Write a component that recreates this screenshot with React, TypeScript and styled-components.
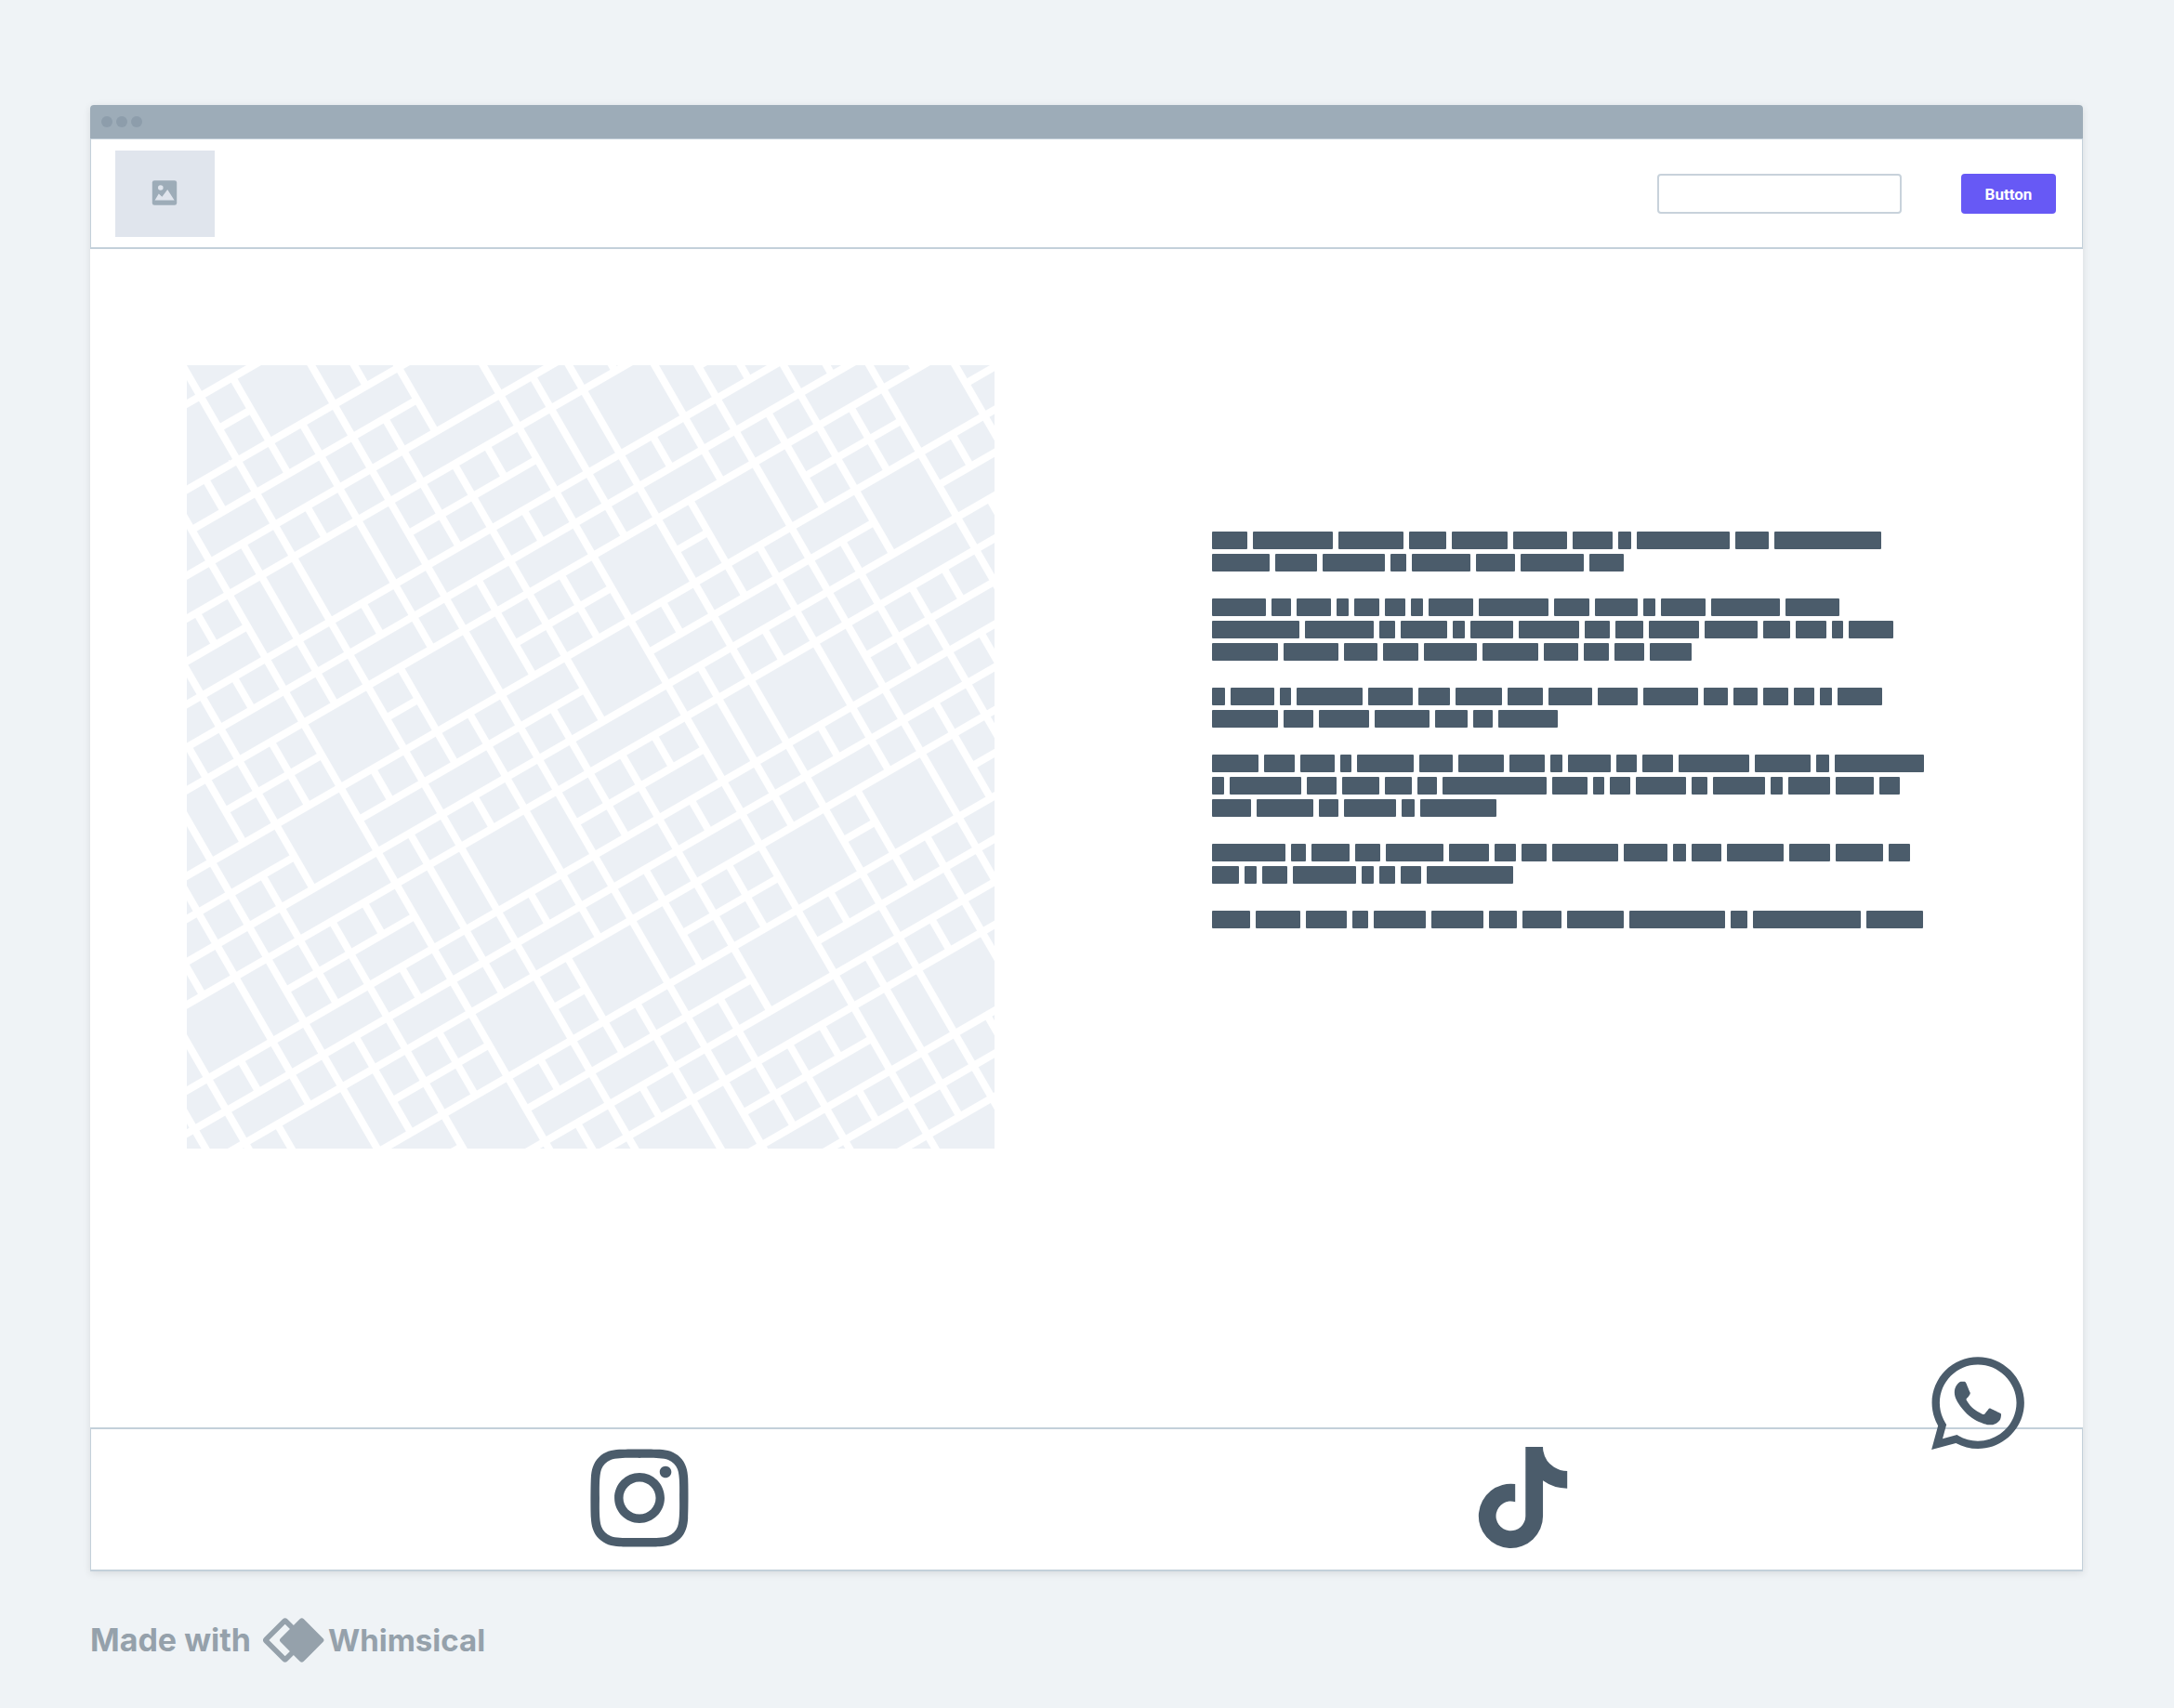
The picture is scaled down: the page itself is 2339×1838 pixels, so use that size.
import React from 'react';
import styled, { createGlobalStyle } from 'styled-components';
import { FaInstagram, FaTiktok, FaWhatsapp } from 'react-icons/fa';

const colors = {
  page: '#eff3f6',
  chrome: '#9dacb8',
  chromeDot: '#8d9dab',
  line: '#c3d0da',
  placeholder: '#e0e5ed',
  block: '#ecf0f5',
  ink: '#4b5c6b',
  accent: '#6759f5',
  credit: '#95a1ab',
};

const GlobalStyle = createGlobalStyle`
  *, *::before, *::after { box-sizing: border-box; }
  body {
    margin: 0;
    background: ${colors.page};
    font-family: Inter, "Liberation Sans", sans-serif;
  }
`;

const Page = styled.div`
  padding: 113px 98px 48px 97px;
`;

const Window = styled.div`
  border-radius: 4px 4px 0 0;
  background: #fff;
  box-shadow: 0 2px 8px rgba(0, 0, 0, 0.1);
`;

const TitleBar = styled.div`
  display: flex;
  align-items: center;
  gap: 4px;
  height: 36px;
  padding: 0 12px;
  border-radius: 4px 4px 0 0;
  background: ${colors.chrome};
`;

const Dot = styled.span`
  width: 12px;
  height: 12px;
  border-radius: 50%;
  background: ${colors.chromeDot};
`;

const Header = styled.header`
  display: flex;
  align-items: center;
  justify-content: space-between;
  padding: 12px 28px 11px 26px;
  border: 1px solid ${colors.line};
  border-bottom-width: 2px;
`;

const ImagePlaceholder = styled.div`
  display: flex;
  align-items: center;
  justify-content: center;
  width: 107px;
  height: 93px;
  background: ${colors.placeholder};
`;

const Actions = styled.form`
  display: flex;
  align-items: center;
  gap: 64px;
`;

const SearchInput = styled.input`
  width: 263px;
  height: 43px;
  padding: 0 12px;
  border: 2px solid #c8d2db;
  border-radius: 4px;
  background: #fff;
  color: ${colors.ink};
  font: 500 17px Roboto, sans-serif;
`;

const PrimaryButton = styled.button`
  width: 102px;
  height: 43px;
  padding: 0;
  border: 0;
  border-radius: 4px;
  background: ${colors.accent};
  color: #fff;
  font: 700 17px Roboto, sans-serif;
`;

const Main = styled.main`
  display: grid;
  grid-template-columns: minmax(0, 869px) minmax(0, 766px);
  column-gap: 234px;
  align-items: start;
  padding: 125px 104px 300px;
`;

const MapDrawing = styled.svg`
  display: block;
  width: 100%;
  height: auto;
`;

const Copy = styled.div`
  display: flex;
  flex-direction: column;
  gap: 29px;
  padding-top: 179px;
`;

const Paragraph = styled.div`
  display: flex;
  flex-direction: column;
  gap: 5px;
`;

const Line = styled.div`
  display: flex;
  gap: 6px;
`;

const Word = styled.span`
  height: 19px;
  border-radius: 1px;
  background: ${colors.ink};
`;

const Footer = styled.footer`
  position: relative;
  display: flex;
  align-items: center;
  justify-content: space-between;
  height: 155px;
  padding: 0 25.5% 4px 24.7%;
  border: 1px solid ${colors.line};
  border-top-width: 2px;
  border-bottom-width: 2px;
`;

const SocialLink = styled.a<{ $size: number }>`
  display: flex;
  color: ${colors.ink};
  font-size: ${(p) => p.$size}px;
`;

const FloatingLink = styled(SocialLink)`
  position: absolute;
  top: -85px;
  right: 55px;
`;

const Credit = styled.div`
  display: flex;
  align-items: center;
  margin-top: 50px;
  color: ${colors.credit};
  font-size: 34px;
  font-weight: 700;
  line-height: 48px;
`;

const CreditLogo = styled.svg`
  display: block;
  width: 66px;
  height: 48px;
  margin: 0 4px 0 13px;
`;

const CreditBrand = styled.span`
  font-size: 33px;
`;

const UNIT = 40;
const ROAD = 8;

/* City blocks as [column, row, columns spanned, rows spanned] on a 9 x 9 tile. */
const cityBlocks: number[][] = [
  [0, 0, 1, 1], [1, 0, 1, 1], [2, 0, 1, 1], [3, 0, 2, 1], [5, 0, 2, 2], [7, 0, 1, 1], [8, 0, 1, 1],
  [0, 1, 2, 1], [2, 1, 1, 1], [3, 1, 1, 1], [4, 1, 1, 1], [7, 1, 2, 1],
  [0, 2, 1, 1], [1, 2, 1, 1], [2, 2, 1, 1], [3, 2, 1, 1], [4, 2, 3, 1], [7, 2, 1, 1], [8, 2, 1, 1],
  [0, 3, 2, 2], [2, 3, 1, 2], [3, 3, 1, 1], [4, 3, 1, 1], [5, 3, 1, 1], [6, 3, 1, 1], [7, 3, 1, 2], [8, 3, 1, 2],
  [3, 4, 1, 1], [4, 4, 1, 1], [5, 4, 2, 1],
  [0, 5, 1, 1], [1, 5, 1, 1], [2, 5, 1, 1], [3, 5, 2, 1], [5, 5, 1, 1], [6, 5, 1, 1], [7, 5, 1, 1], [8, 5, 1, 1],
  [0, 6, 2, 1], [2, 6, 1, 1], [3, 6, 1, 1], [4, 6, 1, 1], [5, 6, 2, 1], [7, 6, 1, 1], [8, 6, 1, 1],
  [0, 7, 1, 1], [1, 7, 2, 2], [3, 7, 1, 2], [4, 7, 1, 1], [5, 7, 1, 1], [6, 7, 1, 1], [7, 7, 2, 2],
  [0, 8, 1, 1], [4, 8, 1, 1], [5, 8, 1, 1], [6, 8, 1, 1],
];

/* Word widths, grouped by paragraph and line. */
const paragraphs: number[][][] = [
  [
    [38, 86, 70, 40, 60, 58, 43, 14, 100, 36, 115],
    [62, 45, 67, 17, 63, 42, 68, 37],
  ],
  [
    [58, 21, 37, 13, 27, 22, 13, 48, 75, 38, 46, 13, 48, 74, 58],
    [94, 74, 17, 50, 13, 46, 65, 27, 30, 54, 57, 29, 33, 12, 48],
    [71, 59, 36, 38, 57, 60, 37, 27, 32, 45],
  ],
  [
    [14, 47, 12, 71, 48, 34, 50, 38, 47, 43, 59, 26, 26, 27, 22, 13, 48],
    [71, 32, 54, 59, 35, 21, 64],
  ],
  [
    [50, 33, 37, 12, 61, 36, 49, 38, 13, 46, 22, 33, 76, 60, 14, 96],
    [13, 77, 32, 40, 29, 21, 112, 38, 12, 22, 54, 17, 56, 13, 45, 41, 22],
    [42, 61, 21, 56, 14, 82],
  ],
  [
    [79, 16, 41, 27, 62, 43, 23, 27, 71, 47, 14, 32, 61, 44, 51, 23],
    [29, 13, 27, 68, 13, 17, 22, 93],
  ],
  [[41, 48, 44, 17, 56, 56, 30, 42, 61, 103, 18, 116, 61]],
];

const CityMap = () => (
  <MapDrawing viewBox="0 0 869 843" role="img" aria-label="Map">
    <defs>
      <pattern
        id="city"
        width={UNIT * 9}
        height={UNIT * 9}
        patternUnits="userSpaceOnUse"
        patternTransform="translate(54.5 102.5) rotate(-30)"
      >
        {cityBlocks.map(([col, row, w, h]) => (
          <rect
            key={`${col}-${row}`}
            x={col * UNIT + ROAD / 2}
            y={row * UNIT + ROAD / 2}
            width={w * UNIT - ROAD}
            height={h * UNIT - ROAD}
            fill={colors.block}
          />
        ))}
      </pattern>
    </defs>
    <rect width="869" height="843" fill="url(#city)" />
  </MapDrawing>
);

export default function App() {
  return (
    <>
      <GlobalStyle />
      <Page>
        <Window>
          <TitleBar>
            <Dot />
            <Dot />
            <Dot />
          </TitleBar>
          <Header>
            <ImagePlaceholder>
              <svg width="29" height="29" viewBox="0 0 29 29" aria-hidden="true">
                <rect x="0.8" y="0.2" width="26.4" height="26.6" rx="2.4" fill={colors.chrome} />
                <circle cx="9.8" cy="8" r="2.8" fill="#e0e5ed" />
                <path d="M3.6 21.5 L7.8 14.6 L11.4 17.8 L17.2 10 L24.6 21.5 Z" fill="#e0e5ed" />
              </svg>
            </ImagePlaceholder>
            <Actions onSubmit={(e) => e.preventDefault()}>
              <SearchInput type="text" aria-label="Search" />
              <PrimaryButton type="submit">Button</PrimaryButton>
            </Actions>
          </Header>
          <Main>
            <CityMap />
            <Copy aria-hidden="true">
              {paragraphs.map((lines, p) => (
                <Paragraph key={p}>
                  {lines.map((words, l) => (
                    <Line key={l}>
                      {words.map((width, w) => (
                        <Word key={w} style={{ width }} />
                      ))}
                    </Line>
                  ))}
                </Paragraph>
              ))}
            </Copy>
          </Main>
          <Footer>
            <SocialLink href="#instagram" aria-label="Instagram" $size={120}>
              <FaInstagram />
            </SocialLink>
            <SocialLink href="#tiktok" aria-label="TikTok" $size={109}>
              <FaTiktok />
            </SocialLink>
            <FloatingLink href="#whatsapp" aria-label="WhatsApp" $size={114}>
              <FaWhatsapp />
            </FloatingLink>
          </Footer>
        </Window>
        <Credit>
          <span>Made with</span>
          <CreditLogo viewBox="0 0 66 48" aria-hidden="true">
            <rect
              x="8.7"
              y="9"
              width="30"
              height="30"
              rx="1"
              fill="none"
              stroke={colors.credit}
              strokeWidth="5.6"
              strokeLinejoin="round"
              transform="rotate(45 23.7 24)"
            />
            <rect x="24.1" y="6.4" width="35.2" height="35.2" rx="3" fill={colors.credit} transform="rotate(45 41.7 24)" />
          </CreditLogo>
          <CreditBrand>Whimsical</CreditBrand>
        </Credit>
      </Page>
    </>
  );
}
